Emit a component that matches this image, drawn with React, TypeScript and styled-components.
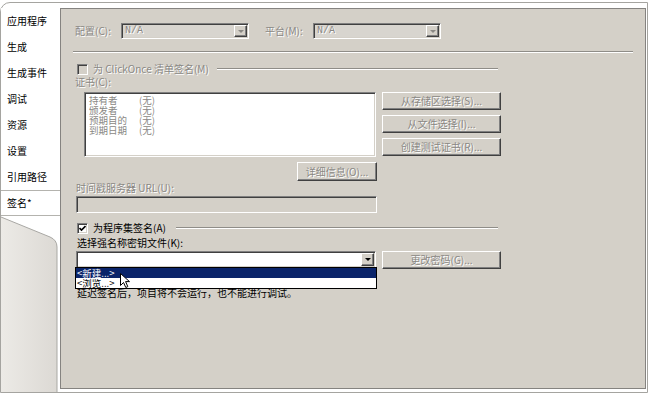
import React from 'react';
import styled, { createGlobalStyle, css } from 'styled-components';

const Global = createGlobalStyle`
  html, body { margin: 0; padding: 0; background: #fff; }
  * { box-sizing: border-box; }
`;

const FONT = `"Noto Sans CJK SC", "DejaVu Sans", sans-serif`;

const sunken = css`
  border: 1px solid;
  border-color: #808080 #ffffff #ffffff #808080;
  box-shadow: inset 1px 1px 0 #404040, inset -1px -1px 0 #d4d0c8;
`;

const raised = css`
  border: 1px solid;
  border-color: #ffffff #404040 #404040 #ffffff;
  box-shadow: inset -1px -1px 0 #808080;
`;

const Root = styled.div`
  width: 650px;
  height: 396px;
  overflow: hidden;
  background: #fff;
  font-family: ${FONT};
  font-size: 10px;
  padding-top: 2px;
`;

const Frame = styled.div`
  width: 648px;
  height: 391px;
  border: 1px solid #a5a4a0;
  border-top-left-radius: 10px;
  display: grid;
  grid-template-columns: 59px 1fr;
  background: #fff;
`;

const TabColumn = styled.div`
  display: flex;
  flex-direction: column;
  padding-top: 5px;
`;

const Tab = styled.div<{ $active?: boolean }>`
  height: 26px;
  display: flex;
  align-items: center;
  padding-left: 6px;
  color: #000;
  font-size: 10px;
  line-height: 12px;
  background: #fff;
  white-space: nowrap;
  ${(p) =>
    p.$active &&
    css`
      border-top: 1px solid #b4b3ae;
      border-bottom: 1px solid #b4b3ae;
    `}
`;

const TabFooter = styled.div`
  flex: 1;
  min-height: 0;
`;

const FooterArt = styled.svg`
  display: block;
  width: 100%;
  height: 100%;
`;

const Panel = styled.div`
  margin: 5px 1px 3px 0;
  background: #d4d0c8;
  border: 1px solid #858380;
  padding: 14px 0 0 14px;
  display: flex;
  flex-direction: column;
`;

const Row = styled.div<{ $h: number; $mt?: number; $ml?: number; $w?: number }>`
  display: flex;
  align-items: center;
  height: ${(p) => p.$h}px;
  margin-top: ${(p) => p.$mt ?? 0}px;
  margin-left: ${(p) => p.$ml ?? 0}px;
  ${(p) => (p.$w ? `width: ${p.$w}px;` : '')}
`;

const Label = styled.span<{ $disabled?: boolean; $w?: number }>`
  flex: none;
  white-space: nowrap;
  line-height: 12px;
  font-size: 10px;
  ${(p) => (p.$w ? `width: ${p.$w}px;` : '')}
  color: ${(p) => (p.$disabled ? '#8a8884' : '#000')};
  text-shadow: ${(p) => (p.$disabled ? '1px 1px 0 #ffffff' : 'none')};
`;

const ComboWrap = styled.div<{ $w: number; $ml?: number }>`
  position: relative;
  width: ${(p) => p.$w}px;
  height: 100%;
  margin-left: ${(p) => p.$ml ?? 0}px;
  flex: none;
`;

const ComboBox = styled.div<{ $disabled?: boolean }>`
  ${sunken};
  width: 100%;
  height: 100%;
  display: flex;
  padding: 1px;
  background: ${(p) => (p.$disabled ? '#d8d5cf' : '#ffffff')};
`;

const ComboText = styled.span`
  flex: 1;
  padding-left: 2px;
  line-height: 12px;
  font-family: "Liberation Mono", monospace;
  font-size: 10px;
  color: #8a8884;
  text-shadow: 1px 1px 0 #fff;
`;

const ComboFill = styled.span`
  flex: 1;
`;

const ComboArrow = styled.span<{ $disabled?: boolean }>`
  ${raised};
  width: 13px;
  flex: none;
  background: #d4d0c8;
  display: flex;
  align-items: center;
  justify-content: center;
  &::after {
    content: '';
    border-left: 3px solid transparent;
    border-right: 3px solid transparent;
    border-top: 3px solid ${(p) => (p.$disabled ? '#8a8884' : '#000')};
  }
`;

const Etched = styled.div<{ $w?: number; $ml?: number }>`
  height: 2px;
  border-top: 1px solid #8f8d88;
  border-bottom: 1px solid #ffffff;
  margin-left: ${(p) => p.$ml ?? 0}px;
  ${(p) => (p.$w ? `width: ${p.$w}px; flex: none;` : 'flex: 1;')}
`;

const Check = styled.span<{ $disabled?: boolean }>`
  ${sunken};
  width: 11px;
  height: 11px;
  flex: none;
  margin-left: 2px;
  margin-right: 5px;
  background: ${(p) => (p.$disabled ? '#d4d0c8' : '#ffffff')};
  display: flex;
  align-items: center;
  justify-content: center;
`;

const CertArea = styled.div`
  display: flex;
  margin-top: 4px;
  height: 65px;
`;

const ListBox = styled.div`
  ${sunken};
  background: #fff;
  width: 292px;
  height: 65px;
  margin-left: 9px;
  padding: 2px 0 0 4px;
`;

const ListRow = styled.div`
  display: grid;
  grid-template-columns: 50px auto;
  height: 10px;
  line-height: 10px;
  font-size: 9.5px;
  color: #8a8884;
  text-shadow: 1px 1px 0 #fff;
  white-space: nowrap;
`;

const ButtonColumn = styled.div`
  display: flex;
  flex-direction: column;
  gap: 5px;
  margin-left: 6px;
  width: 119px;
`;

const Button = styled.div<{ $w?: number; $h?: number; $ml?: number }>`
  ${raised};
  background: #d4d0c8;
  width: ${(p) => p.$w ?? 119}px;
  height: ${(p) => p.$h ?? 18}px;
  margin-left: ${(p) => p.$ml ?? 0}px;
  flex: none;
  display: flex;
  align-items: center;
  justify-content: center;
  font-size: 10px;
  line-height: 12px;
  white-space: nowrap;
  color: #8a8884;
  text-shadow: 1px 1px 0 #ffffff;
`;

const TextBox = styled.div`
  ${sunken};
  background: #d4d0c8;
  width: 301px;
  height: 17px;
  margin-left: 1px;
  margin-top: 2px;
`;

const DropList = styled.div`
  position: absolute;
  left: -1px;
  top: 16px;
  width: 302px;
  height: 22px;
  border: 1px solid #000;
  background: #fff;
  z-index: 2;
`;

const DropItem = styled.div<{ $selected?: boolean }>`
  height: 10px;
  line-height: 10px;
  font-size: 9.5px;
  padding-left: 1px;
  white-space: nowrap;
  background: ${(p) => (p.$selected ? '#0a246a' : '#fff')};
  color: ${(p) => (p.$selected ? '#fff' : '#000')};
`;

const Cursor = styled.svg`
  position: absolute;
  left: 44px;
  top: 5px;
  z-index: 3;
`;

const tabs = ['应用程序', '生成', '生成事件', '调试', '资源', '设置', '引用路径', '签名*'];

export default function App() {
  return (
    <Root>
      <Global />
      <Frame>
        <TabColumn>
          {tabs.map((t, i) => (
            <Tab key={t} $active={i === tabs.length - 1}>
              {t}
            </Tab>
          ))}
          <TabFooter>
            <FooterArt>
              <defs>
                <linearGradient id="fg" x1="0" y1="0" x2="1" y2="0">
                  <stop offset="0" stopColor="#eceae6" />
                  <stop offset="1" stopColor="#dcd9d4" />
                </linearGradient>
              </defs>
              <path d="M0,1 L49,21 Q56,24 56,31 L56,400 L0,400 Z" fill="url(#fg)" />
              <path d="M0,1 L49,21 Q56,24 56,31 L56,400" fill="none" stroke="#a9a8a4" strokeWidth="1" />
            </FooterArt>
          </TabFooter>
        </TabColumn>

        <Panel>
          <Row $h={16}>
            <Label $disabled $w={46}>配置(C):</Label>
            <ComboWrap $w={128}>
              <ComboBox $disabled>
                <ComboText>N/A</ComboText>
                <ComboArrow $disabled />
              </ComboBox>
            </ComboWrap>
            <Label $disabled $w={48} style={{ marginLeft: 16 }}>平台(M):</Label>
            <ComboWrap $w={128}>
              <ComboBox $disabled>
                <ComboText>N/A</ComboText>
                <ComboArrow $disabled />
              </ComboBox>
            </ComboWrap>
          </Row>

          <Row $h={2} $mt={12} $ml={-2}>
            <Etched $w={560} />
          </Row>

          <Row $h={12} $mt={10} $w={423}>
            <Check $disabled />
            <Label $disabled>为 ClickOnce 清单签名(M)</Label>
            <Etched $ml={8} />
          </Row>

          <Row $h={12} $mt={1}>
            <Label $disabled>证书(C):</Label>
          </Row>

          <CertArea>
            <ListBox>
              <ListRow><span>持有者</span><span>(无)</span></ListRow>
              <ListRow><span>颁发者</span><span>(无)</span></ListRow>
              <ListRow><span>预期目的</span><span>(无)</span></ListRow>
              <ListRow><span>到期日期</span><span>(无)</span></ListRow>
            </ListBox>
            <ButtonColumn>
              <Button>从存储区选择(S)...</Button>
              <Button>从文件选择(I)...</Button>
              <Button>创建测试证书(R)...</Button>
            </ButtonColumn>
          </CertArea>

          <Row $h={19} $mt={5}>
            <Button $w={80} $h={19} $ml={222}>详细信息(O)...</Button>
          </Row>

          <Row $h={12} $mt={1} $ml={1}>
            <Label $disabled>时间戳服务器 URL(U):</Label>
          </Row>
          <TextBox />

          <Row $h={12} $mt={9} $w={423}>
            <Check>
              <svg width="7" height="7" viewBox="0 0 7 7">
                <path d="M0.5,3 L2.5,5 L6.5,1" fill="none" stroke="#000" strokeWidth="1.6" />
              </svg>
            </Check>
            <Label>为程序集签名(A)</Label>
            <Etched $ml={10} />
          </Row>

          <Row $h={12} $mt={3} $ml={2}>
            <Label>选择强名称密钥文件(K):</Label>
          </Row>

          <Row $h={17} $mt={2}>
            <ComboWrap $w={300} $ml={1}>
              <ComboBox>
                <ComboFill />
                <ComboArrow />
              </ComboBox>
              <DropList>
                <DropItem $selected>&lt;新建...&gt;</DropItem>
                <DropItem>&lt;浏览...&gt;</DropItem>
                <Cursor width="11" height="16" viewBox="0 0 11 16">
                  <path d="M0.5,0.5 L0.5,12.5 L3.5,9.5 L5.8,14.5 L7.8,13.6 L5.6,8.6 L9.5,8.6 Z" fill="#fff" stroke="#000" strokeWidth="1" />
                </Cursor>
              </DropList>
            </ComboWrap>
            <Button $ml={6} $h={18}>更改密码(G)...</Button>
          </Row>

          <Row $h={12} $mt={19} $ml={2}>
            <Label>延迟签名后，项目将不会运行，也不能进行调试。</Label>
          </Row>
        </Panel>
      </Frame>
    </Root>
  );
}
